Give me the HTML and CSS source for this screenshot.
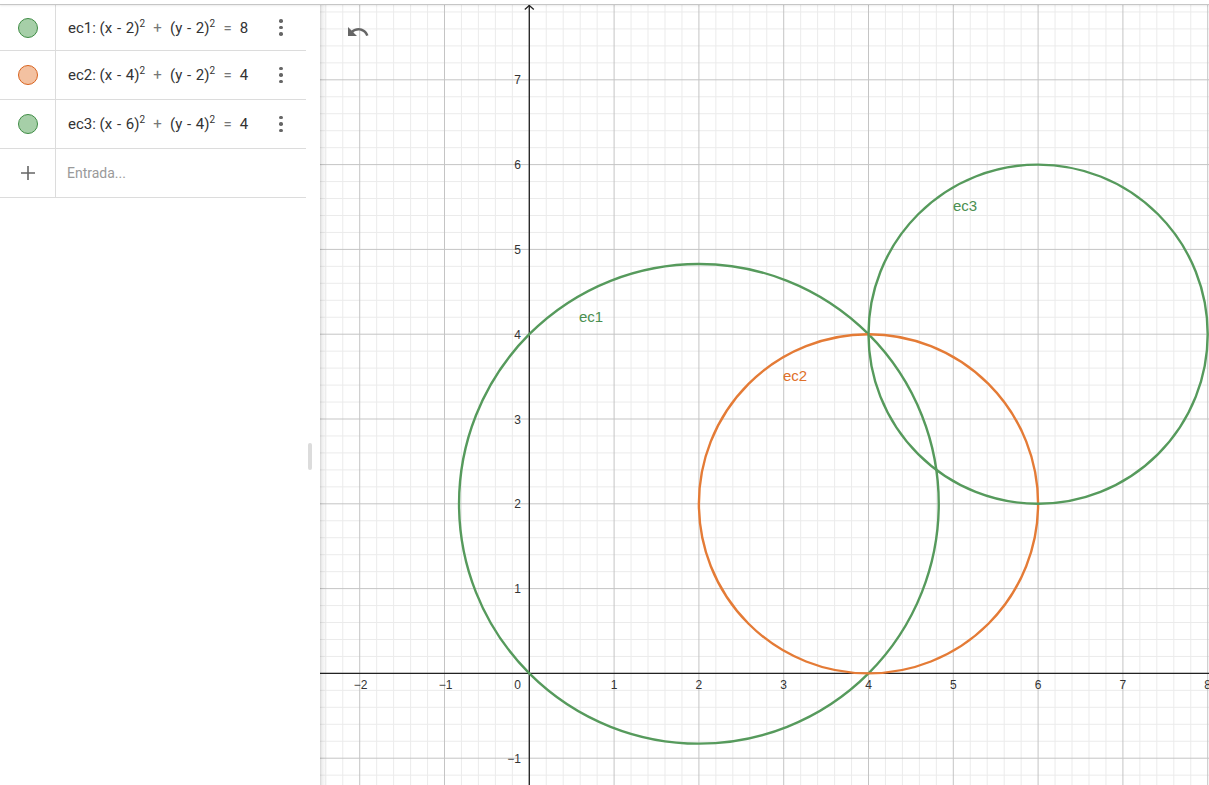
FILE: index.html
```html
<!DOCTYPE html>
<html lang="es">
<head>
  <meta charset="UTF-8">
  <meta name="viewport" content="width=device-width, initial-scale=1.0">
  <title>GeoGebra - Calculadora gráfica</title>
  <link rel="stylesheet" href="styles.css">
</head>
<body>

  <div class="topbar"></div>

  <div class="main">

    <!-- Vista algebraica -->
    <div class="algebra">
      <div class="row">
        <div class="marble"><span class="dot green"></span></div>
        <div class="formula">ec1: (x <span class="minus">-</span> 2)<sup>2</sup> <span class="op">+</span> (y <span class="minus">-</span> 2)<sup>2</sup> <span class="op">=</span> 8</div>
        <div class="more"><i></i><i></i><i></i></div>
      </div>
      <div class="row">
        <div class="marble"><span class="dot orange"></span></div>
        <div class="formula">ec2: (x <span class="minus">-</span> 4)<sup>2</sup> <span class="op">+</span> (y <span class="minus">-</span> 2)<sup>2</sup> <span class="op">=</span> 4</div>
        <div class="more"><i></i><i></i><i></i></div>
      </div>
      <div class="row">
        <div class="marble"><span class="dot green"></span></div>
        <div class="formula">ec3: (x <span class="minus">-</span> 6)<sup>2</sup> <span class="op">+</span> (y <span class="minus">-</span> 4)<sup>2</sup> <span class="op">=</span> 4</div>
        <div class="more"><i></i><i></i><i></i></div>
      </div>
      <div class="row">
        <div class="marble">
          <svg width="16" height="16" viewBox="0 0 16 16"><path d="M8 1v14M1 8h14" stroke="#666" stroke-width="1.6"/></svg>
        </div>
        <div class="formula placeholder">Entrada...</div>
      </div>
    </div>

    <div class="splitter"><span class="handle"></span></div>

    <!-- Vista gráfica -->
    <div class="graphics">
      <svg class="plot" width="889" height="780" viewBox="0 0 889 780">
        <defs>
          <pattern id="grid" patternUnits="userSpaceOnUse" x="166.9" y="626" width="84.8" height="84.8">
            <g stroke="#ebebeb" stroke-width="1">
              <path d="M8.48 0V84.8M25.44 0V84.8M59.36 0V84.8M76.32 0V84.8"/>
              <path d="M0 8.48H84.8M0 25.44H84.8M0 59.36H84.8M0 76.32H84.8"/>
            </g>
            <g stroke="#c4c4c4" stroke-width="1">
              <path d="M42.4 0V84.8M0 42.4H84.8"/>
            </g>
          </pattern>
        </defs>
        <rect width="889" height="780" fill="#fff"/>
        <rect width="889" height="780" fill="url(#grid)"/>

        <!-- ejes -->
        <g stroke="#222" stroke-width="1.3" fill="none">
          <path d="M0 668.4H889"/>
          <path d="M209.3 0V780"/>
          <path d="M204.8 4.5L209.3 0.5L213.8 4.5"/>
        </g>

        <g class="ticks" text-anchor="middle">
          <text x="40.7" y="684">−2</text>
          <text x="125.5" y="684">−1</text>
          <text x="294.1" y="684">1</text>
          <text x="378.9" y="684">2</text>
          <text x="463.7" y="684">3</text>
          <text x="548.5" y="684">4</text>
          <text x="633.3" y="684">5</text>
          <text x="718.1" y="684">6</text>
          <text x="802.9" y="684">7</text>
          <text x="887.7" y="684">8</text>
        </g>
        <g class="ticks" text-anchor="end">
          <text x="201" y="684">0</text>
          <text x="201" y="588.1">1</text>
          <text x="201" y="503.3">2</text>
          <text x="201" y="418.5">3</text>
          <text x="201" y="333.7">4</text>
          <text x="201" y="248.9">5</text>
          <text x="201" y="164.1">6</text>
          <text x="201" y="79.3">7</text>
          <text x="201" y="757.7">−1</text>
        </g>

        <!-- cónicas -->
        <g fill="none" stroke-width="2.4">
          <circle cx="378.9" cy="498.8" r="239.85" stroke="#569a5c"/>
          <circle cx="548.5" cy="498.8" r="169.6" stroke="#e47b36"/>
          <circle cx="718.1" cy="329.2" r="169.6" stroke="#569a5c"/>
        </g>

        <g class="labels">
          <text x="259" y="317" fill="#4a8f50">ec1</text>
          <text x="463" y="376" fill="#e0702a">ec2</text>
          <text x="633" y="206" fill="#4a8f50">ec3</text>
        </g>
      </svg>

      <button class="undo" title="Deshacer">
        <svg width="24" height="24" viewBox="0 0 24 24"><path fill="#666" d="M12.5 8c-2.65 0-5.05.99-6.9 2.6L2 7v9h9l-3.62-3.62c1.39-1.16 3.16-1.88 5.12-1.88 3.54 0 6.55 2.31 7.6 5.5l2.37-.78C21.08 11.03 17.15 8 12.5 8z"/></svg>
      </button>
    </div>

  </div>

</body>
</html>
```

FILE: styles.css
```css
html, body {
  margin: 0;
  height: 100%;
  overflow: hidden;
}

body {
  font-family: Roboto, 'Liberation Sans', sans-serif;
  background-color: #fff;
  color: #333;
  display: flex;
  flex-direction: column;
}

.topbar {
  height: 4px;
  border-bottom: 1px solid #c6c6c6;
  box-shadow: 0 1px 2px rgba(0, 0, 0, 0.08);
  position: relative;
  z-index: 2;
}

.main {
  flex: 1;
  display: flex;
  min-height: 0;
}

/* algebra view */
.algebra {
  width: 306px;
  flex-shrink: 0;
}

.row {
  display: flex;
  align-items: center;
  height: 48px;
  border-bottom: 1px solid #dcdcdc;
}

.row:first-child {
  height: 45px;
}

.marble {
  width: 55px;
  align-self: stretch;
  border-right: 1px solid #dcdcdc;
  display: flex;
  align-items: center;
  justify-content: center;
  flex-shrink: 0;
}

.dot {
  width: 18px;
  height: 18px;
  border-radius: 50%;
  border: 1px solid;
}

.dot.green {
  background-color: #a6cfa8;
  border-color: #3f8c45;
}

.dot.orange {
  background-color: #f3c1a1;
  border-color: #d8631f;
}

.formula {
  flex: 1;
  padding-left: 12px;
  font-size: 15px;
  color: #333;
  white-space: nowrap;
}

.formula sup {
  font-size: 10px;
  vertical-align: 6px;
  line-height: 0;
}

.formula .op {
  color: #777;
  margin: 0 4.5px;
}

.formula .minus {
  margin: 0 1px;
}

.placeholder {
  color: #9a9a9a;
  font-size: 14px;
  padding-left: 11px;
}

.more {
  width: 14px;
  margin-right: 18px;
  display: flex;
  flex-direction: column;
  align-items: center;
  gap: 3px;
}

.more i {
  width: 3.5px;
  height: 3.5px;
  border-radius: 50%;
  background-color: #666;
}

/* splitter */
.splitter {
  width: 14px;
  flex-shrink: 0;
  display: flex;
  align-items: center;
}

.handle {
  width: 4px;
  height: 27px;
  margin-left: 2px;
  margin-top: 122px;
  border-radius: 2px;
  background-color: #dcdcdc;
}

/* graphics view */
.graphics {
  flex: 1;
  position: relative;
  overflow: hidden;
}

.graphics::before {
  content: '';
  position: absolute;
  left: 0;
  top: 0;
  bottom: 0;
  width: 7px;
  background: linear-gradient(to right, rgba(0, 0, 0, 0.16), rgba(0, 0, 0, 0.06) 30%, rgba(0, 0, 0, 0));
  z-index: 1;
}

.plot {
  display: block;
}

.ticks text {
  font-family: 'Liberation Sans', Arial, sans-serif;
  font-size: 12px;
  fill: #333;
}

.labels text {
  font-family: 'Liberation Sans', Arial, sans-serif;
  font-size: 15px;
}

.undo {
  position: absolute;
  left: 26px;
  top: 15px;
  padding: 0;
  border: none;
  background: none;
  cursor: pointer;
  line-height: 0;
}
```
